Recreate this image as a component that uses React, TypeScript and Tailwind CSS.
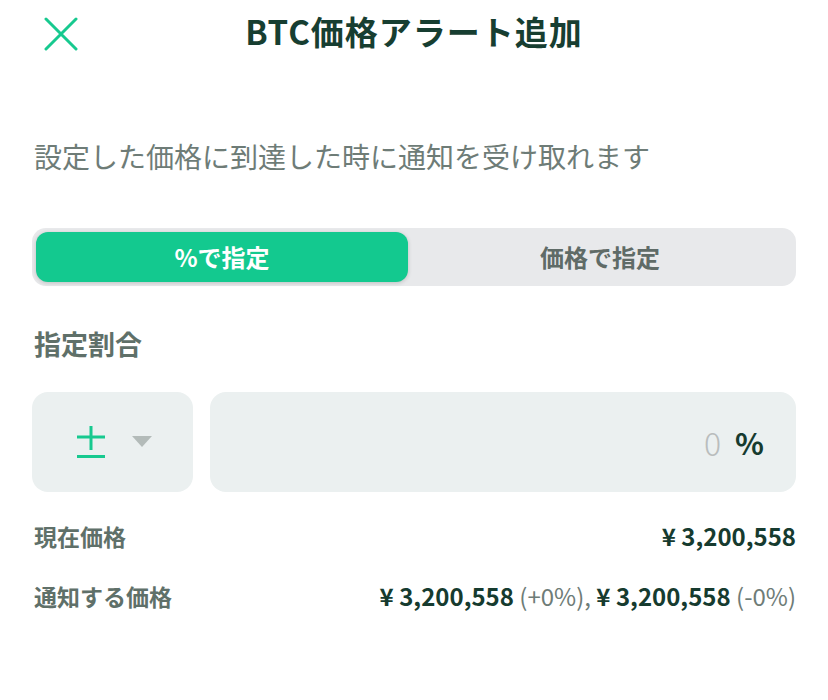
import React from "react";

const font = { fontFamily: '"Noto Sans CJK JP", "Noto Sans", sans-serif' };

export default function App() {
  return (
    <div className="w-[828px] h-[700px] bg-white" style={font}>
      <div className="relative flex h-[68px] items-center justify-center pb-[6px]">
        <button className="absolute left-[44px] top-[17px] h-[34px] w-[34px]">
          <svg viewBox="0 0 34 34" className="h-[34px] w-[34px]">
            <path d="M2 2 L32 32 M32 2 L2 32" stroke="#17c98f" strokeWidth="3" strokeLinecap="round" fill="none" />
          </svg>
        </button>
        <h1 className="text-[33px] font-bold leading-none tracking-[1px] text-[#173e31]">BTC価格アラート追加</h1>
      </div>

      <div className="px-[32px]">
        <p className="mt-[74px] text-[28px] leading-none tracking-[0px] text-[#6e7c77] pl-[2px]">
          設定した価格に到達した時に通知を受け取れます
        </p>

        <div className="mt-[58px] flex h-[58px] rounded-[14px] bg-[#e8e9eb] p-[4px]">
          <div className="flex w-[372px] items-center justify-center rounded-[12px] bg-[#13c98f] text-[24px] font-bold text-white shadow-[0_1px_4px_rgba(0,0,0,0.18)]">
            %で指定
          </div>
          <div className="flex flex-1 items-center justify-center text-[24px] font-bold text-[#5f6b67]">
            価格で指定
          </div>
        </div>

        <div className="mt-[44px] pl-[2px] text-[27px] font-bold leading-none text-[#5f7069]">指定割合</div>

        <div className="mt-[35px] flex h-[100px] gap-[17px]">
          <div className="flex w-[161px] items-center justify-center gap-[26px] rounded-[16px] bg-[#ebf0f0] pl-[2px]">
            <svg viewBox="0 0 30 34" className="h-[34px] w-[30px]">
              <path d="M1 12 H29 M15 1 V25 M1 31.5 H29" stroke="#17c98f" strokeWidth="3" fill="none" />
            </svg>
            <svg viewBox="0 0 20 12" className="h-[12px] w-[20px]">
              <path d="M0 0 H20 L10 11 Z" fill="#b3bbb9" />
            </svg>
          </div>
          <div className="flex flex-1 items-center justify-end gap-[14px] rounded-[16px] bg-[#ebf0f0] pr-[32px]">
            <span className="text-[32px] font-light leading-none text-[#b9bdbd]">0</span>
            <span className="text-[30px] font-bold leading-none text-[#163b2f]">%</span>
          </div>
        </div>

        <div className="mt-[26px] flex items-center justify-between pl-[2px]">
          <span className="text-[23px] font-bold text-[#5f7069]">現在価格</span>
          <span className="text-[24px] font-bold text-[#163b2f]">¥ 3,200,558</span>
        </div>
        <div className="mt-[24px] flex items-center justify-between pl-[2px]">
          <span className="text-[23px] font-bold text-[#5f7069]">通知する価格</span>
          <span className="text-[24px] text-[#163b2f]">
            <span className="font-bold">¥ 3,200,558</span>
            <span className="font-normal text-[#6e7c77]"> (+0%), </span>
            <span className="font-bold">¥ 3,200,558</span>
            <span className="font-normal text-[#6e7c77]"> (-0%)</span>
          </span>
        </div>
      </div>
    </div>
  );
}
